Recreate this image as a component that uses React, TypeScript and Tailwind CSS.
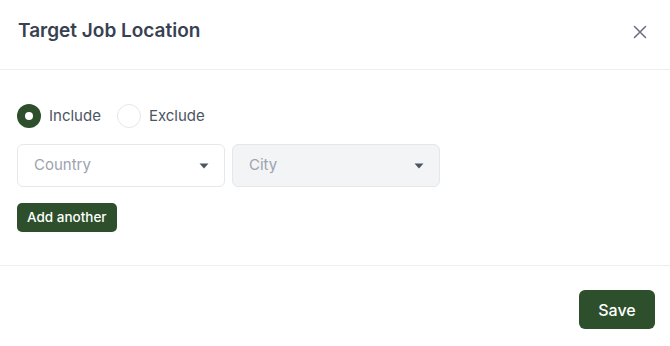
import { useState } from "react";

const font = { fontFamily: "Inter, 'Noto Sans', sans-serif" };

function Caret() {
  return (
    <svg width="10" height="6" viewBox="0 0 10 6" className="shrink-0">
      <path d="M0.5 0.5h9L5 5.5z" fill="#4b5563" />
    </svg>
  );
}

function Radio({ checked, label, onClick }: { checked: boolean; label: string; onClick: () => void }) {
  return (
    <button type="button" onClick={onClick} className="flex items-center gap-[8px]">
      {checked ? (
        <span className="flex h-[24px] w-[24px] items-center justify-center rounded-full bg-[#2d4f2b]">
          <span className="h-[8px] w-[8px] rounded-full bg-white" />
        </span>
      ) : (
        <span className="h-[24px] w-[24px] rounded-full border border-[#e5e7eb] bg-white" />
      )}
      <span className="text-[15px] text-[#4b5563]">{label}</span>
    </button>
  );
}

export default function App() {
  const [mode, setMode] = useState<"include" | "exclude">("include");

  return (
    <div style={font} className="h-[346px] w-[670px] bg-white">
      {/* Header */}
      <div className="flex h-[70px] items-center justify-between border-b border-[#eeeeee] pb-[6px] pl-[18px] pr-[23px]">
        <h2 className="text-[19px] font-semibold text-[#374151]">Target Job Location</h2>
        <svg width="14" height="14" viewBox="0 0 14 14" fill="none" stroke="#6b7280" strokeWidth="1.6" strokeLinecap="round">
          <path d="M1.5 1.5l11 11M12.5 1.5l-11 11" />
        </svg>
      </div>

      {/* Body */}
      <div className="flex flex-col gap-[16px] border-b border-[#eeeeee] px-[17px] pb-[33px] pt-[34px]">
        <div className="flex items-center gap-[16px]">
          <Radio checked={mode === "include"} label="Include" onClick={() => setMode("include")} />
          <Radio checked={mode === "exclude"} label="Exclude" onClick={() => setMode("exclude")} />
        </div>

        <div className="flex gap-[7px]">
          <div className="flex h-[43px] w-[208px] items-center justify-between rounded-[6px] border border-[#e5e7eb] bg-white pl-[16px] pr-[15px]">
            <span className="text-[15px] text-[#9ca3af]">Country</span>
            <Caret />
          </div>
          <div className="flex h-[43px] w-[208px] items-center justify-between rounded-[6px] border border-[#e5e7eb] bg-[#f3f4f6] pl-[16px] pr-[15px]">
            <span className="text-[15px] text-[#9ca3af]">City</span>
            <Caret />
          </div>
        </div>

        <div>
          <button type="button" className="h-[29px] rounded-[5px] bg-[#2d4f2b] px-[10px] text-[13.5px] font-medium text-white">
            Add another
          </button>
        </div>
      </div>

      {/* Footer */}
      <div className="flex justify-end pr-[15px] pt-[24px]">
        <button type="button" className="h-[39px] w-[76px] rounded-[6px] bg-[#2d4f2b] text-[16px] font-medium text-white">
          Save
        </button>
      </div>
    </div>
  );
}
